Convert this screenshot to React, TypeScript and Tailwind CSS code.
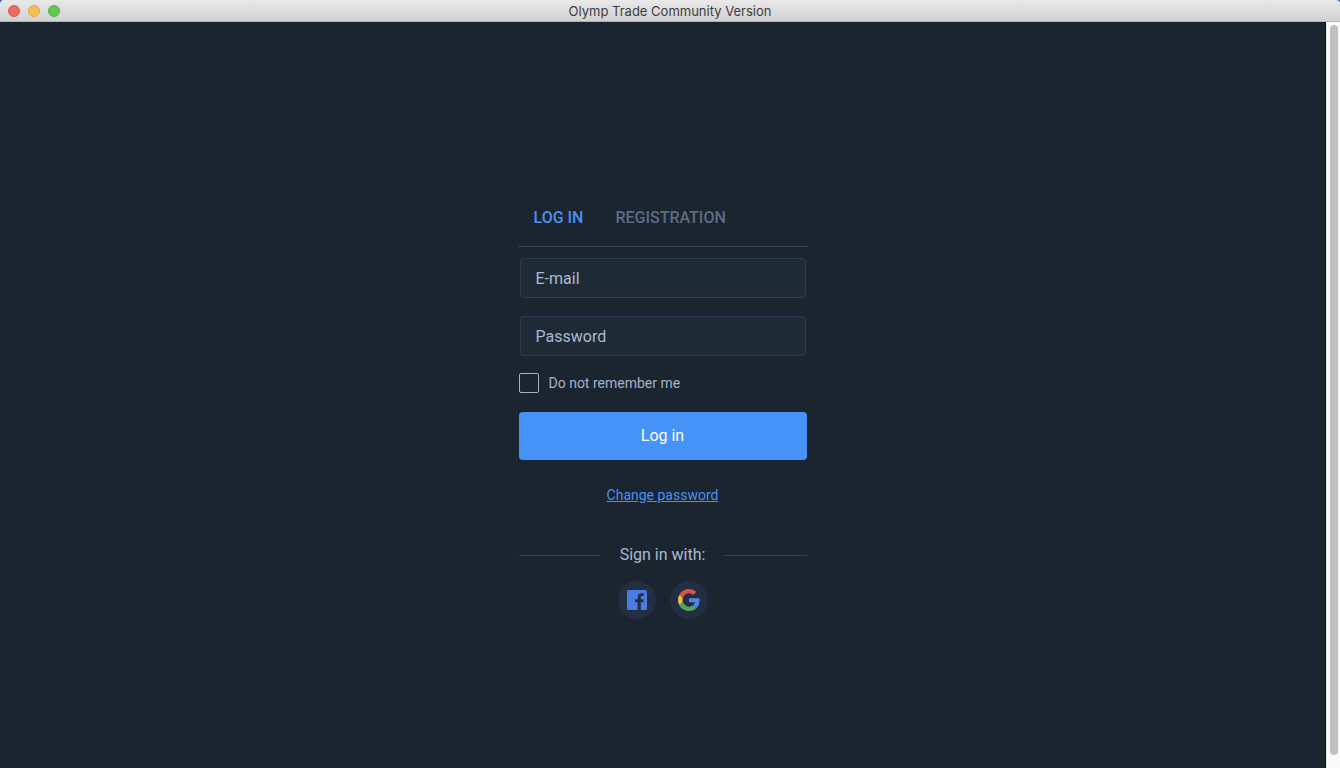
import { useState } from "react";

function TitleBar() {
  return (
    <header className="grid h-[22px] shrink-0 grid-cols-[1fr_auto_1fr] items-center rounded-t-[4px] border-b border-[#b4b4b4] bg-linear-to-b from-[#e9e9e9] to-[#d1d1d1] px-2">
      <div className="flex gap-2">
        <button type="button" aria-label="Close" className="size-3 rounded-full border border-[#dd5a50] bg-[#ed6a5f]" />
        <button type="button" aria-label="Minimize" className="size-3 rounded-full border border-[#dfa945] bg-[#f5bf50]" />
        <button type="button" aria-label="Zoom" className="size-3 rounded-full border border-[#53b345] bg-[#62c655]" />
      </div>
      <h1 className="font-[Inter,sans-serif] text-[13px] leading-5 text-[#3c3c3c]">Olymp Trade Community Version</h1>
    </header>
  );
}

function FacebookIcon() {
  return (
    <svg viewBox="0 0 21 21" className="size-5" aria-hidden="true">
      <path
        fill="#4a7be5"
        d="M1.8 0h17.4A1.8 1.8 0 0 1 21 1.8v17.4a1.8 1.8 0 0 1-1.8 1.8h-4.7v-8.1h2.6l.4-3.1h-3V7.8c0-.9.3-1.5 1.6-1.5h1.5V3.6c-.3 0-1.2-.1-2.3-.1-2.4 0-4 1.4-4 4v2.3H8.4v3.1h2.7V21H1.8A1.8 1.8 0 0 1 0 19.2V1.8A1.8 1.8 0 0 1 1.8 0z"
      />
    </svg>
  );
}

function GoogleIcon() {
  return (
    <svg viewBox="0 0 48 48" className="size-[22px]" aria-hidden="true">
      <path fill="#d65745" d="M24 9.5c3.54 0 6.71 1.22 9.21 3.6l6.85-6.85C35.9 2.38 30.47 0 24 0 14.62 0 6.51 5.38 2.56 13.22l7.98 6.19C12.43 13.72 17.74 9.5 24 9.5z" />
      <path fill="#4c86ee" d="M46.98 24.55c0-1.57-.15-3.09-.38-4.55H24v9.02h12.94c-.58 2.96-2.26 5.48-4.78 7.18l7.73 6c4.51-4.18 7.09-10.36 7.09-17.65z" />
      <path fill="#f2be42" d="M10.53 28.59c-.48-1.45-.76-2.99-.76-4.59s.27-3.14.76-4.59l-7.98-6.19C.92 16.46 0 20.12 0 24c0 3.88.92 7.54 2.56 10.78l7.97-6.19z" />
      <path fill="#58a55c" d="M24 48c6.48 0 11.93-2.13 15.89-5.81l-7.73-6c-2.15 1.45-4.92 2.3-8.16 2.3-6.26 0-11.57-4.22-13.47-9.91l-7.98 6.19C6.51 42.62 14.62 48 24 48z" />
    </svg>
  );
}

const fieldClass =
  "h-10 w-full rounded-[4px] border border-[#2d3d51] bg-[#1f2a37] px-[15px] text-base text-[#a9bad0] outline-none placeholder:text-[#a9bad0] focus:border-[#4593f7]";

export default function App() {
  const [tab, setTab] = useState("login");

  return (
    <div className="flex h-screen flex-col bg-[#1b2530] font-[Roboto,sans-serif]">
      <div className="bg-[#3d5f9f]">
        <TitleBar />
      </div>
      <div className="flex min-h-0 flex-1">
        <main className="flex flex-1 flex-col items-center justify-center border-r border-[#0d1420] bg-[#1b2530] pt-4">
          <div className="w-full max-w-[290px]">
            <nav className="flex h-[60px] gap-8 border-b border-[#2f3f54] px-4 pt-[2px] text-base font-medium">
              <button type="button" onClick={() => setTab("login")} className={tab === "login" ? "text-[#4a90ee]" : "text-[#5c6c84]"}>
                LOG IN
              </button>
              <button type="button" onClick={() => setTab("registration")} className={tab === "registration" ? "text-[#4a90ee]" : "text-[#5c6c84]"}>
                REGISTRATION
              </button>
            </nav>
            <form onSubmit={(e) => e.preventDefault()} className="px-px pt-[11px]">
              <div className="flex flex-col gap-[18px] px-px">
                <input type="email" aria-label="E-mail" placeholder="E-mail" className={fieldClass} />
                <input type="password" aria-label="Password" placeholder="Password" className={fieldClass} />
              </div>
              <label className="mt-[17px] flex items-center gap-2.5 text-sm leading-5 text-[#a3b2c7]">
                <input
                  type="checkbox"
                  className="size-5 appearance-none rounded-[2px] border border-[#a3b2c7] checked:border-[#4593f7] checked:bg-[#4593f7]"
                />
                Do not remember me
              </label>
              <button type="submit" className="mt-[19px] h-12 w-full rounded-[4px] bg-[#4593f7] text-base text-white">
                Log in
              </button>
            </form>
            <p className="mt-[25px] text-center text-sm leading-5">
              <a href="#" className="text-[#4a90ee] underline">
                Change password
              </a>
            </p>
            <div className="mt-[38px] flex items-center gap-5 px-px">
              <span className="h-px flex-1 bg-[#2f3f54]" />
              <span className="text-base leading-6 text-[#a9bad0]">Sign in with:</span>
              <span className="h-px flex-1 bg-[#2f3f54]" />
            </div>
            <div className="mt-[14px] flex justify-center gap-[14px]">
              <button type="button" aria-label="Sign in with Facebook" className="flex size-[38px] items-center justify-center rounded-full bg-[#232e43]">
                <FacebookIcon />
              </button>
              <button type="button" aria-label="Sign in with Google" className="flex size-[38px] items-center justify-center rounded-full bg-[#232e43]">
                <GoogleIcon />
              </button>
            </div>
          </div>
        </main>
        <div className="flex w-[14px] justify-center border-l border-[#e6e6e6] bg-[#fafafa] pt-[3px] pb-[13px]" aria-hidden="true">
          <div className="w-2 rounded-full bg-[#c1c1c1]" />
        </div>
      </div>
    </div>
  );
}
